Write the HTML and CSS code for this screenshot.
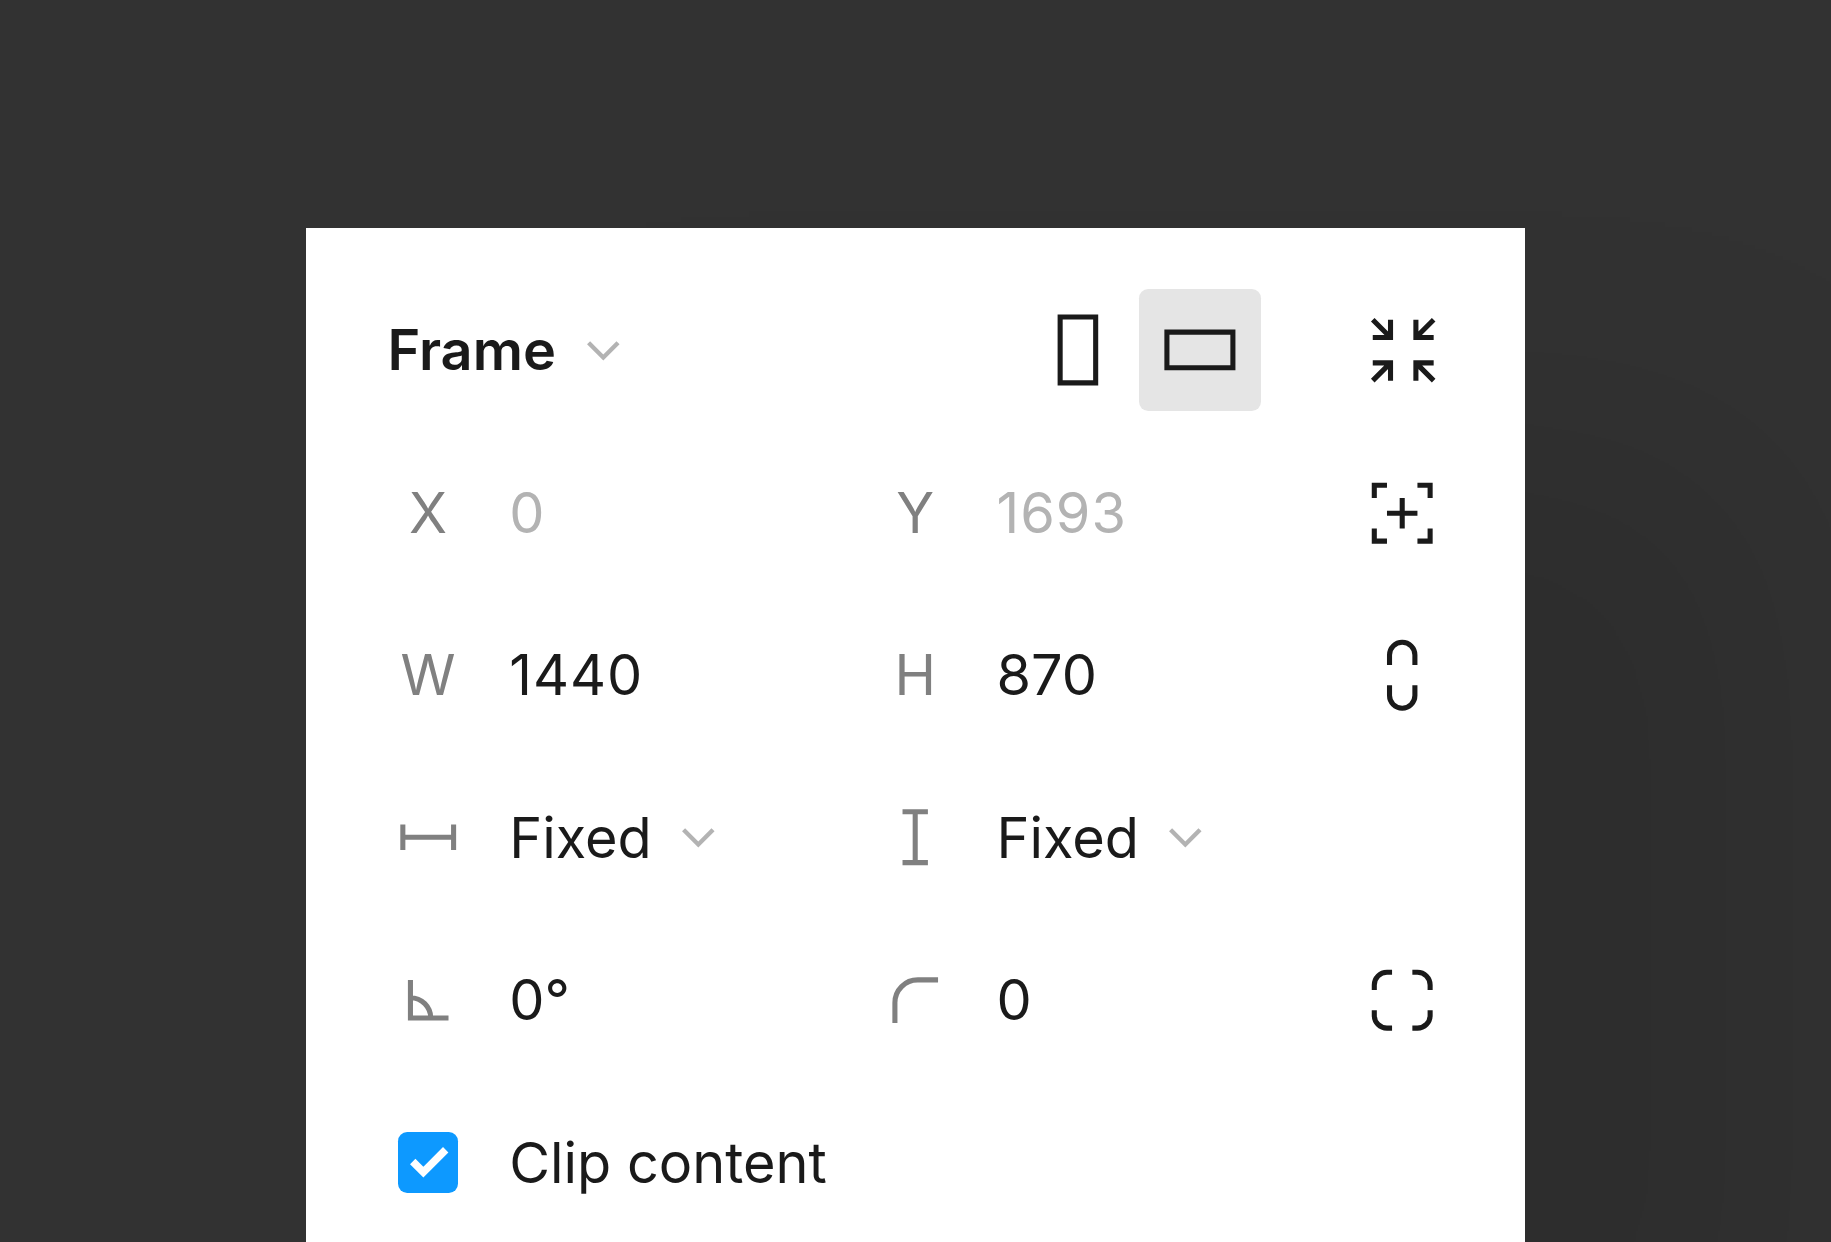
FILE: index.html
```html
<!DOCTYPE html>
<html lang="en">
<head>
<meta charset="utf-8">
<title>Frame properties</title>
<link rel="stylesheet" href="styles.css">
</head>
<body>
<main class="panel">
  <header class="header">
    <button class="title">
      <span>Frame</span>
      <svg class="chevron" viewBox="-4 -4 8 8"><path d="M-2.9 -1.5L0 1.4L2.9 -1.5"/></svg>
    </button>
    <button class="orientation" aria-label="Portrait"><svg class="icon" viewBox="-12 -12 24 24"><path d="M-3.5 -6.5H3.5V6.5H-3.5Z"/></svg></button>
    <button class="orientation selected" aria-label="Landscape"><svg class="icon" viewBox="-12 -12 24 24"><path d="M-6.5 -3.5H6.5V3.5H-6.5Z"/></svg></button>
    <button class="action fit" aria-label="Resize to fit"><svg class="icon" viewBox="-16 -16 32 32"><path d="M-6 -2.5H-2.5V-6M-6 -6L-2.5 -2.5M6 -2.5H2.5V-6M6 -6L2.5 -2.5M-6 2.5H-2.5V6M-6 6L-2.5 2.5M6 2.5H2.5V6M6 6L2.5 2.5"/></svg></button>
  </header>

  <section class="row">
    <span class="label">X</span><span class="value muted">0</span>
    <span class="label">Y</span><span class="value muted wide">1693</span>
    <button class="action" aria-label="Absolute position"><svg class="icon" viewBox="-16 -16 32 32"><path d="M-5.5 -3V-5.5H-3M3 -5.5H5.5V-3M5.5 3V5.5H3M-3 5.5H-5.5V3M0 -3V3M-3 0H3"/></svg></button>
  </section>

  <section class="row">
    <span class="label">W</span><span class="value wide">1440</span>
    <span class="label">H</span><span class="value">870</span>
    <button class="action" aria-label="Constrain proportions"><svg class="icon" viewBox="-16 -16 32 32"><path d="M-2.5 -2V-4A2.5 2.5 0 0 1 2.5 -4V-2M-2.5 2V4A2.5 2.5 0 0 0 2.5 4V2"/></svg></button>
  </section>

  <section class="row">
    <span class="label"><svg class="icon" viewBox="-16 -16 32 32"><path d="M-5 -2.5V2.5M5 -2.5V2.5M-5 0H5"/></svg></span>
    <span class="value">Fixed<svg class="chevron" viewBox="-4 -4 8 8"><path d="M-2.9 -1.5L0 1.4L2.9 -1.5"/></svg></span>
    <span class="label"><svg class="icon" viewBox="-16 -16 32 32"><path d="M-2.5 -5H2.5M-2.5 5H2.5M0 -5V5"/></svg></span>
    <span class="value">Fixed<svg class="chevron" viewBox="-4 -4 8 8"><path d="M-2.9 -1.5L0 1.4L2.9 -1.5"/></svg></span>
  </section>

  <section class="row">
    <span class="label"><svg class="icon" viewBox="-16 -16 32 32"><path d="M-3.5 -4V3.5H4M-3.5 -.5A4 4 0 0 1 .5 3.5"/></svg></span>
    <span class="value">0°</span>
    <span class="label"><svg class="icon" viewBox="-16 -16 32 32"><path d="M-4 4.5V.5A4.5 4.5 0 0 1 .5 -4H4.5"/></svg></span>
    <span class="value">0</span>
    <button class="action" aria-label="Independent corners"><svg class="icon" viewBox="-16 -16 32 32"><path d="M-5.5 -2V-3A2.5 2.5 0 0 1 -3 -5.5H-2M2 -5.5H3A2.5 2.5 0 0 1 5.5 -3V-2M5.5 2V3A2.5 2.5 0 0 1 3 5.5H2M-2 5.5H-3A2.5 2.5 0 0 1 -5.5 3V2"/></svg></button>
  </section>

  <section class="row">
    <span class="label"><span class="checkbox"><svg class="check" viewBox="-6 -6 12 12"><path d="M-3.1 -.2L-1 1.9L3.4 -2.5"/></svg></span></span>
    <span class="value">Clip content</span>
  </section>
</main>
</body>
</html>
```
FILE: styles.css
```css
:root {
  --u: 5.076px;
}

* {
  box-sizing: border-box;
}

body {
  margin: 0;
  height: 1242px;
  overflow: hidden;
  padding: 228px 0 0 306px;
  background: #323232;
  color: #1a1a1a;
  font-family: Inter, "Liberation Sans", sans-serif;
  font-size: calc(11 * var(--u));
  line-height: 1;
}

button {
  padding: 0;
  border: 0;
  background: none;
  color: inherit;
  font: inherit;
}

.panel {
  width: 1218.6px;
  height: 1014px;
  padding: calc(8.1 * var(--u)) calc(8 * var(--u)) 0 calc(8.04 * var(--u));
  background: #fff;
  box-shadow: 240px 220px 340px rgba(0, 0, 0, .1);
}

.header {
  display: flex;
  align-items: center;
  height: calc(32 * var(--u));
  padding-left: calc(8 * var(--u));
}

.title {
  display: flex;
  align-items: center;
  gap: calc(5.4 * var(--u));
  margin-right: auto;
  font-weight: 600;
}

.orientation {
  width: calc(24 * var(--u));
  height: calc(24 * var(--u));
  border-radius: calc(1.8 * var(--u));
}

.selected {
  background: #e5e5e5;
}

.fit {
  margin-left: calc(12 * var(--u));
}

.row {
  display: grid;
  grid-template-columns: calc(32 * var(--u)) calc(64 * var(--u)) calc(32 * var(--u)) calc(64 * var(--u)) calc(32 * var(--u));
  align-items: center;
  height: calc(32 * var(--u));
}

.label {
  display: flex;
  align-items: center;
  justify-content: center;
  color: #808080;
}

.value {
  display: flex;
  align-items: center;
  gap: calc(5.1 * var(--u));
  white-space: nowrap;
}

.muted {
  color: #b3b3b3;
}

.wide {
  letter-spacing: .018em;
}

.action {
  width: calc(32 * var(--u));
  height: calc(32 * var(--u));
}

.icon,
.check {
  display: block;
  width: 100%;
  fill: none;
  stroke: currentColor;
  stroke-width: 1;
}

.chevron {
  width: calc(8 * var(--u));
  height: calc(8 * var(--u));
  fill: none;
  stroke: #b3b3b3;
  stroke-width: .85;
}

.checkbox {
  width: calc(12 * var(--u));
  height: calc(12 * var(--u));
  border-radius: calc(1.8 * var(--u));
  background: #0d99ff;
}

.check {
  stroke: #fff;
  stroke-width: 1.5;
}
```
